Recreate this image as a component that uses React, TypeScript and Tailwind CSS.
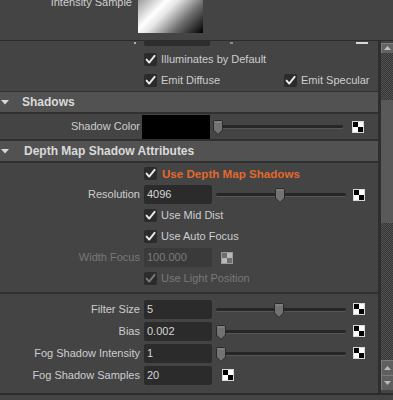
import React from "react";

function Check({ disabled = false }: { disabled?: boolean }) {
  return (
    <div className="w-[13px] h-[13px] bg-[#2b2b2b] rounded-[2px] flex items-center justify-center shrink-0">
      <svg width="11" height="11" viewBox="0 0 11 11">
        <path
          d="M1.6 5.6 L4.2 8.6 L9.6 1.8"
          stroke={disabled ? "#7a7a7a" : "#ececec"}
          strokeWidth="1.9"
          fill="none"
          strokeLinecap="round"
          strokeLinejoin="round"
        />
      </svg>
    </div>
  );
}

function Checker({ disabled = false }: { disabled?: boolean }) {
  if (disabled) {
    return (
      <div className="w-[12px] h-[12px] border border-[#9a9a9a] grid grid-cols-2 grid-rows-2 shrink-0">
        <div className="bg-[#6e6e6e]" />
        <div className="bg-[#b8b8b8]" />
        <div className="bg-[#b8b8b8]" />
        <div className="bg-[#6e6e6e]" />
      </div>
    );
  }
  return (
    <div className="w-[12px] h-[12px] border border-[#d8d8d8] grid grid-cols-2 grid-rows-2 shrink-0">
      <div className="bg-black" />
      <div className="bg-white" />
      <div className="bg-white" />
      <div className="bg-black" />
    </div>
  );
}

function Thumb() {
  return (
    <svg width="10" height="15" viewBox="0 0 10 15">
      <path
        d="M1.5 0.5 H8.5 Q9.5 0.5 9.5 1.5 V10 L5 14.5 L0.5 10 V1.5 Q0.5 0.5 1.5 0.5 Z"
        fill="#727272"
        stroke="#2a2a2a"
        strokeWidth="1"
      />
      <path d="M2 2 H8" stroke="#8c8c8c" strokeWidth="1" />
    </svg>
  );
}

function Slider({ pos }: { pos: number }) {
  return (
    <div className="relative w-[130px] h-[19px] shrink-0">
      <div className="absolute left-0 right-0 top-[8px] h-[3px] rounded-full bg-[#262626] shadow-[0_1px_0_#575757]" />
      <div className="absolute top-[3px] flex" style={{ left: pos }}>
        <Thumb />
      </div>
    </div>
  );
}

function Field({ value, disabled = false }: { value: string; disabled?: boolean }) {
  return (
    <div
      className={
        disabled
          ? "w-[68px] h-[19px] bg-[#3a3a3a] rounded-[2px] pl-[3px] flex items-center text-[#7a7a7a] shrink-0"
          : "w-[68px] h-[19px] bg-[#2b2b2b] rounded-[2px] pl-[3px] flex items-center text-[#d6d6d6] shrink-0"
      }
    >
      {value}
    </div>
  );
}

function Label({ text, disabled = false }: { text: string; disabled?: boolean }) {
  return (
    <div
      className={
        disabled
          ? "w-[140px] text-right text-[#787878] shrink-0 whitespace-nowrap"
          : "w-[140px] text-right shrink-0 whitespace-nowrap"
      }
    >
      {text}
    </div>
  );
}

function SliderRow({ label, value, pos }: { label: string; value: string; pos: number }) {
  return (
    <div className="h-[22px] flex items-center">
      <Label text={label} />
      <div className="ml-[4px]">
        <Field value={value} />
      </div>
      <div className="ml-[4px]">
        <Slider pos={pos} />
      </div>
      <div className="ml-[7px]">
        <Checker />
      </div>
    </div>
  );
}

function CheckRow({
  text,
  disabled = false,
  accent = false,
}: {
  text: string;
  disabled?: boolean;
  accent?: boolean;
}) {
  return (
    <div className="h-[21px] flex items-center">
      <div className="w-[144px] shrink-0" />
      <Check disabled={disabled} />
      <span
        className={
          accent
            ? "ml-[5px] font-bold text-[11.6px] text-[#e2692d]"
            : disabled
            ? "ml-[4px] text-[#787878]"
            : "ml-[4px]"
        }
      >
        {text}
      </span>
    </div>
  );
}

function Header({ title, indent }: { title: string; indent: string }) {
  return (
    <div className="h-[20px] bg-[#525252] flex items-center shrink-0">
      <svg width="8" height="5" viewBox="0 0 8 5" className="ml-[1px]">
        <path d="M0 0 H8 L4 4.5 Z" fill="#d8d8d8" />
      </svg>
      <span className={indent + " font-bold text-[12px] text-[#dadada] whitespace-nowrap"}>{title}</span>
    </div>
  );
}

function Dotted({ h }: { h: string }) {
  return (
    <div
      className={
        h +
        " bg-[repeating-conic-gradient(#353535_0_25%,#525252_0_50%)] bg-[length:2px_2px] shrink-0"
      }
    />
  );
}

function ScrollButton({ up }: { up: boolean }) {
  return (
    <div className="h-[15px] bg-[#5f5f5f] border-t border-l border-[#7a7a7a] flex items-center justify-center shrink-0">
      <svg width="7" height="4" viewBox="0 0 7 4">
        <path d={up ? "M0 4 L3.5 0 L7 4 Z" : "M0 0 L3.5 4 L7 0 Z"} fill="#b8b8b8" />
      </svg>
    </div>
  );
}

export default function App() {
  return (
    <div className="w-[393px] h-[400px] overflow-hidden bg-[#444444] font-['Liberation_Sans',Arial,sans-serif] text-[11px] leading-[13px] text-[#cdcdcd] flex flex-col">
      {/* top intensity sample */}
      <div className="h-[40px] flex shrink-0">
        <div className="w-[132px] text-right -mt-[4px] whitespace-nowrap">Intensity Sample</div>
        <div className="ml-[6px] w-[65px] h-[33px] bg-[linear-gradient(135deg,#9c9c9c_0%,#ffffff_30%,#e4e4e4_42%,#707070_68%,#000000_100%)]" />
      </div>
      <div className="h-[1px] bg-[#2c2c2c] shrink-0" />

      {/* scroll area */}
      <div className="flex h-[352px] shrink-0">
        <div className="w-[381px] flex flex-col overflow-hidden">
          {/* clipped row above */}
          <div className="h-[8px] flex items-start shrink-0">
            <div className="w-[134px] shrink-0" />
            <div className="w-[2px] h-[2px] bg-[#b0b0b0] mt-[1px] shrink-0" />
            <div className="w-[8px] shrink-0" />
            <div className="w-[66px] h-[5px] bg-[#2d2d2d] rounded-b-[2px] shrink-0" />
            <div className="w-[20px] shrink-0" />
            <div className="w-[3px] h-[2px] bg-[#8a8a8a] mt-[1px] shrink-0" />
            <div className="w-[123px] shrink-0" />
            <div className="w-[12px] h-[2px] bg-[#d8d8d8] mt-[1px] shrink-0" />
          </div>

          <CheckRow text="Illuminates by Default" />
          <div className="h-[21px] flex items-center shrink-0">
            <div className="w-[144px] shrink-0" />
            <Check />
            <span className="ml-[4px] w-[123px]">Emit Diffuse</span>
            <Check />
            <span className="ml-[4px]">Emit Specular</span>
          </div>
          <div className="h-[1px] bg-[#303030] shrink-0" />

          <Header title="Shadows" indent="ml-[13px]" />
          <div className="h-[2px] bg-[#303030] shrink-0" />
          <div className="h-[25px] flex items-center shrink-0">
            <Label text="Shadow Color" />
            <div className="ml-[2px] w-[68px] h-[24px] bg-black shrink-0" />
            <div className="ml-[3px]">
              <Slider pos={0} />
            </div>
            <div className="ml-[9px]">
              <Checker />
            </div>
          </div>
          <div className="h-[2px] bg-[#303030] shrink-0" />

          <Header title="Depth Map Shadow Attributes" indent="ml-[15px]" />
          <div className="h-[2px] bg-[#303030] shrink-0" />

          <div className="flex flex-col shrink-0">
            <CheckRow text="Use Depth Map Shadows" accent />
            <div className="h-[21px] flex items-center">
              <Label text="Resolution" />
              <div className="ml-[4px]">
                <Field value="4096" />
              </div>
              <div className="ml-[4px]">
                <Slider pos={59} />
              </div>
              <div className="ml-[7px]">
                <Checker />
              </div>
            </div>
            <CheckRow text="Use Mid Dist" />
            <CheckRow text="Use Auto Focus" />
            <div className="h-[21px] flex items-center">
              <Label text="Width Focus" disabled />
              <div className="ml-[4px]">
                <Field value="100.000" disabled />
              </div>
              <div className="ml-[9px]">
                <Checker disabled />
              </div>
            </div>
            <CheckRow text="Use Light Position" disabled />
          </div>
          <div className="h-[3px] shrink-0" />
          <div className="h-[2px] bg-[#303030] shrink-0" />
          <div className="h-[4px] shrink-0" />

          <SliderRow label="Filter Size" value="5" pos={58} />
          <SliderRow label="Bias" value="0.002" pos={0} />
          <SliderRow label="Fog Shadow Intensity" value="1" pos={0} />
          <div className="h-[22px] flex items-center">
            <Label text="Fog Shadow Samples" />
            <div className="ml-[4px]">
              <Field value="20" />
            </div>
            <div className="ml-[10px]">
              <Checker />
            </div>
          </div>
        </div>

        {/* divider */}
        <div className="w-[3px] bg-[#2e2e2e] shrink-0" />

        {/* scrollbar */}
        <div className="w-[12px] flex flex-col pt-[2px] pb-[3px] shrink-0">
          <div className="h-[10px] bg-[#636363] border-t border-l border-[#7e7e7e] flex items-start justify-center pt-[2px] shrink-0">
            <svg width="7" height="4" viewBox="0 0 7 4">
              <path d="M0 4 L3.5 0 L7 4 Z" fill="#c0c0c0" />
            </svg>
          </div>
          <Dotted h="h-[47px]" />
          <div className="h-[123px] bg-[#595959] shrink-0" />
          <div className="flex-1 bg-[repeating-conic-gradient(#353535_0_25%,#525252_0_50%)] bg-[length:2px_2px]" />
          <ScrollButton up />
          <ScrollButton up={false} />
        </div>
      </div>
      <div className="h-[2px] bg-[#2c2c2c] shrink-0" />
    </div>
  );
}
